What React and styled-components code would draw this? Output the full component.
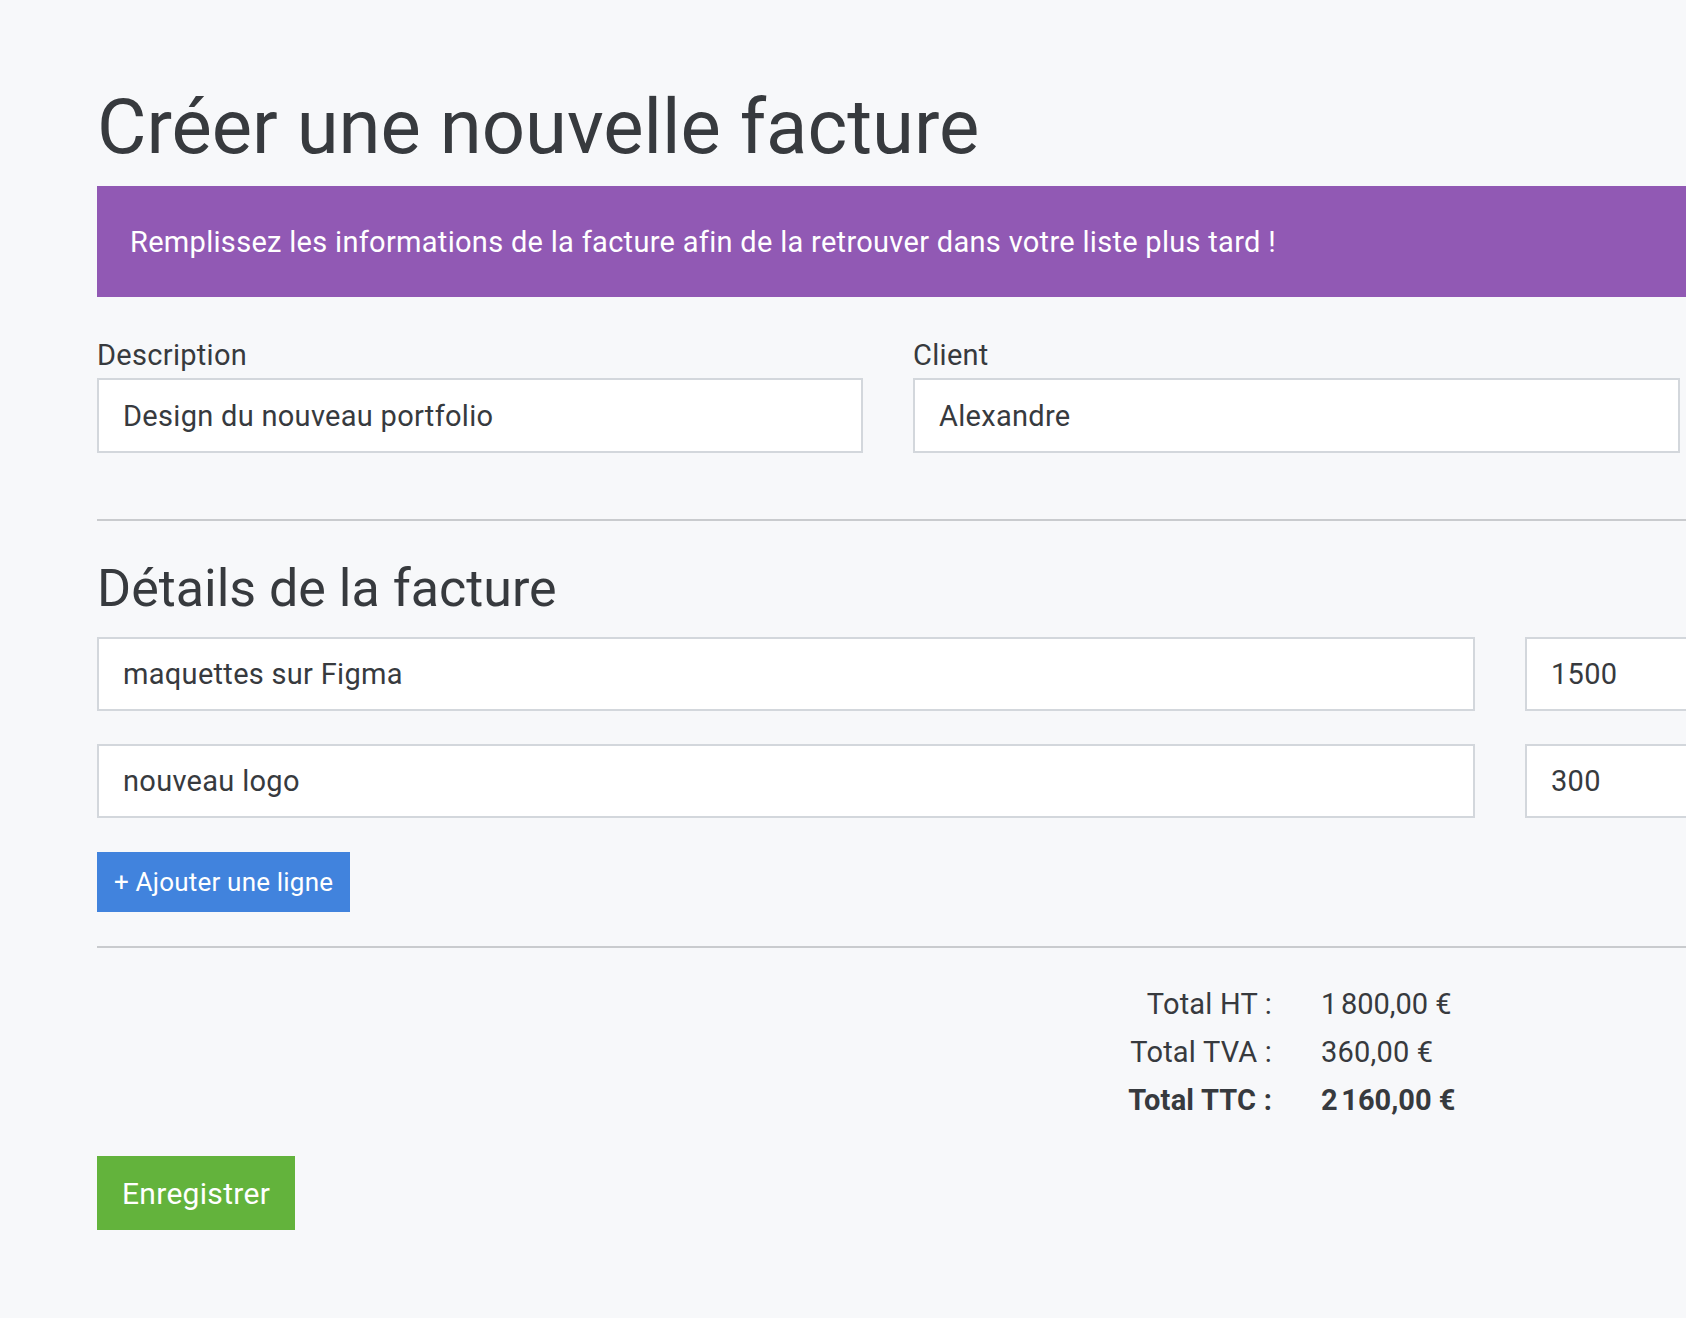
import React from "react";
import styled, { createGlobalStyle } from "styled-components";

const GlobalStyle = createGlobalStyle`
  html, body {
    margin: 0;
    padding: 0;
    background: #f7f8fa;
    overflow: hidden;
  }
  * {
    box-sizing: border-box;
  }
  body {
    font-family: Roboto, "Liberation Sans", sans-serif;
    color: #373a3e;
  }
`;

const Page = styled.div`
  padding: 83px 0 60px 97px;
  width: 1800px;
`;

const Title = styled.h1`
  margin: 0;
  font-size: 76px;
  font-weight: 400;
  line-height: 89px;
  color: #373a3e;
`;

const Alert = styled.div`
  display: flex;
  align-items: center;
  margin-top: 14px;
  height: 111px;
  padding-left: 33px;
  background-color: #9159b4;
  color: #ffffff;
  font-size: 29px;
  letter-spacing: 0.3px;
`;

const FormRow = styled.div`
  display: grid;
  grid-template-columns: 766px 767px;
  column-gap: 50px;
  margin-top: 40px;
`;

const Field = styled.div`
  display: flex;
  flex-direction: column;
`;

const Label = styled.label`
  font-size: 29px;
  letter-spacing: 0.3px;
  line-height: 36px;
  margin-bottom: 5px;
`;

const Input = styled.input`
  height: ${(props) => (props.$short ? "74px" : "75px")};
  width: 100%;
  padding: 0 24px;
  border: 2px solid #d3d7dc;
  border-radius: 0;
  background: #ffffff;
  font-family: Roboto, "Liberation Sans", sans-serif;
  font-size: 29px;
  letter-spacing: 0.3px;
  color: #373a3e;
  outline: none;
`;

const Divider = styled.hr`
  margin: ${(props) => props.$margin};
  border: 0;
  height: 2px;
  background-color: #c9cbce;
`;

const SectionTitle = styled.h2`
  margin: 0;
  font-size: 52px;
  font-weight: 400;
  line-height: 60px;
  color: #373a3e;
`;

const Lines = styled.div`
  display: flex;
  flex-direction: column;
  gap: 33px;
  margin-top: 18px;
`;

const LineRow = styled.div`
  display: grid;
  grid-template-columns: 1378px 320px;
  column-gap: 50px;
`;

const AddButton = styled.button`
  margin-top: 34px;
  height: 60px;
  padding: 0 17px;
  border: 0;
  border-radius: 0;
  background-color: #4183dd;
  color: #ffffff;
  font-family: Roboto, "Liberation Sans", sans-serif;
  font-size: 26px;
  letter-spacing: 0.2px;
  cursor: pointer;
`;

const Totals = styled.div`
  display: grid;
  grid-template-columns: 1175px auto;
  column-gap: 49px;
  font-size: 29px;
  letter-spacing: 0.2px;
  line-height: 48px;
`;

const TotalLabel = styled.div`
  text-align: right;
  font-weight: ${(props) => (props.$strong ? 700 : 400)};
`;

const TotalValue = styled.div`
  font-weight: ${(props) => (props.$strong ? 700 : 400)};
`;

const SaveButton = styled.button`
  margin-top: 32px;
  height: 74px;
  padding: 0 25px;
  border: 0;
  border-radius: 0;
  background-color: #63b33c;
  color: #ffffff;
  font-family: Roboto, "Liberation Sans", sans-serif;
  font-size: 30px;
  letter-spacing: 0.3px;
  cursor: pointer;
`;

const lines = [
  { label: "maquettes sur Figma", amount: "1500" },
  { label: "nouveau logo", amount: "300" },
];

const totals = [
  { label: "Total HT :", value: "1\u202f800,00 €" },
  { label: "Total TVA :", value: "360,00 €" },
  { label: "Total TTC :", value: "2\u202f160,00 €", strong: true },
];

export default function App() {
  return (
    <>
      <GlobalStyle />
      <Page>
        <Title>Créer une nouvelle facture</Title>
        <Alert>
          Remplissez les informations de la facture afin de la retrouver dans
          votre liste plus tard !
        </Alert>

        <FormRow>
          <Field>
            <Label>Description</Label>
            <Input defaultValue="Design du nouveau portfolio" />
          </Field>
          <Field>
            <Label>Client</Label>
            <Input defaultValue="Alexandre" />
          </Field>
        </FormRow>

        <Divider $margin="66px 0 38px 0" />

        <SectionTitle>Détails de la facture</SectionTitle>
        <Lines>
          {lines.map((line) => (
            <LineRow key={line.label}>
              <Input $short defaultValue={line.label} />
              <Input $short defaultValue={line.amount} />
            </LineRow>
          ))}
        </Lines>

        <AddButton>+ Ajouter une ligne</AddButton>

        <Divider $margin="34px 0 32px 0" />

        <Totals>
          {totals.map((t) => (
            <React.Fragment key={t.label}>
              <TotalLabel $strong={t.strong}>{t.label}</TotalLabel>
              <TotalValue $strong={t.strong}>{t.value}</TotalValue>
            </React.Fragment>
          ))}
        </Totals>

        <SaveButton>Enregistrer</SaveButton>
      </Page>
    </>
  );
}
